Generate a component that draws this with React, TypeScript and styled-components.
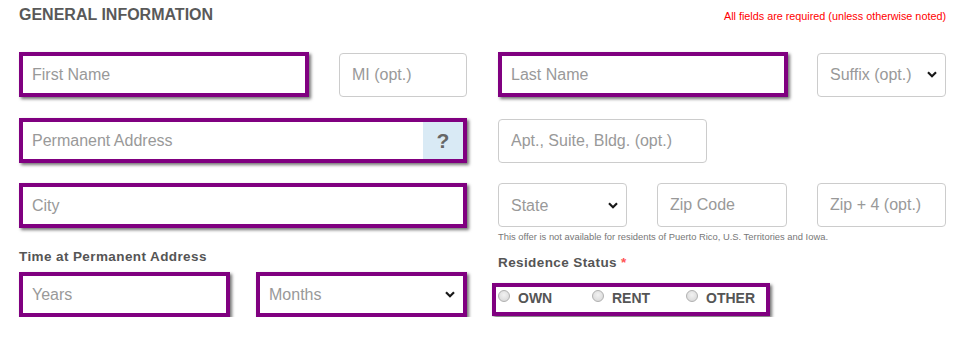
import styled, { createGlobalStyle } from 'styled-components';

const GlobalStyle = createGlobalStyle`
  body {
    margin: 0;
    background: #fff;
    font-family: "Liberation Sans", Arial, sans-serif;
  }
`;

const PURPLE = '#800080';

const Page = styled.div`
  width: 963px;
  box-sizing: border-box;
  padding: 6px 17px 0 19px;
`;

const Header = styled.div`
  display: flex;
  justify-content: space-between;
  align-items: flex-start;
  height: 46px;
`;

const Title = styled.h2`
  margin: 0;
  font-size: 16px;
  line-height: 18px;
  font-weight: bold;
  color: #595959;
`;

const RequiredNote = styled.div`
  margin-top: 4px;
  font-size: 10.8px;
  line-height: 13px;
  color: #f00;
`;

const Row = styled.div<{ $top?: number }>`
  display: grid;
  grid-template-columns: 448px 448px;
  column-gap: 31px;
  margin-top: ${p => p.$top ?? 0}px;
`;

const Cell = styled.div`
  display: flex;
  flex-direction: column;
`;

const Fields = styled.div`
  display: flex;
  justify-content: space-between;
  align-items: center;
`;

const Field = styled.div<{ $w: number; $accent?: boolean }>`
  display: flex;
  align-items: center;
  width: ${p => p.$w}px;
  height: ${p => (p.$accent ? 45 : 44)}px;
  box-sizing: border-box;
  background: #fff;
  border: ${p => (p.$accent ? `4px solid ${PURPLE}` : '1px solid #ccc')};
  border-radius: ${p => (p.$accent ? 0 : 4)}px;
  box-shadow: ${p => (p.$accent ? '2px 2px 3px rgba(0, 0, 0, 0.55)' : 'none')};
  overflow: hidden;
`;

const Input = styled.input<{ $accent?: boolean }>`
  flex: 1;
  min-width: 0;
  height: 100%;
  border: none;
  outline: none;
  background: transparent;
  padding: 0 0 0 ${p => (p.$accent ? 9 : 12)}px;
  font-family: "Liberation Sans", Arial, sans-serif;
  font-size: 16px;
  color: #333;
  &::placeholder {
    color: #999;
  }
`;

const Select = styled.select<{ $accent?: boolean }>`
  flex: 1;
  min-width: 0;
  height: 100%;
  appearance: none;
  border: none;
  outline: none;
  background: transparent;
  padding: 0 0 0 ${p => (p.$accent ? 9 : 12)}px;
  font-family: "Liberation Sans", Arial, sans-serif;
  font-size: 16px;
  color: #999;
`;

const Chevron = styled.svg`
  flex: none;
  margin-right: 8px;
`;

const HelpAddon = styled.span`
  flex: none;
  width: 40px;
  height: 100%;
  display: flex;
  align-items: center;
  justify-content: center;
  background: #d9eaf5;
  color: #666;
  font-size: 21px;
  font-weight: bold;
`;

const SmallNote = styled.div`
  margin-top: 4px;
  font-size: 9.4px;
  line-height: 11px;
  color: #777;
`;

const Label = styled.div<{ $gap: number }>`
  font-size: 13.5px;
  line-height: 16px;
  font-weight: bold;
  letter-spacing: 0.4px;
  color: #555;
  margin-bottom: ${p => p.$gap}px;
`;

const Star = styled.span`
  color: #f55;
`;

const StatusCell = styled(Cell)`
  padding-top: 6px;
`;

const RadioBox = styled.div`
  display: flex;
  width: 278px;
  height: 33px;
  box-sizing: border-box;
  margin-left: -6px;
  padding: 3px 0 0 2px;
  border: 4px solid ${PURPLE};
  box-shadow: 2px 2px 3px rgba(0, 0, 0, 0.55);
`;

const RadioItem = styled.label`
  flex: none;
  display: flex;
  align-items: flex-start;
  gap: 8px;
  width: 94px;
  font-size: 14px;
  line-height: 16px;
  font-weight: bold;
  color: #555;
  white-space: nowrap;
`;

const RadioDot = styled.span`
  flex: none;
  width: 12px;
  height: 12px;
  box-sizing: border-box;
  border-radius: 50%;
  border: 1px solid #b0b0b0;
  background: radial-gradient(circle at 50% 40%, #f2f2f2, #d4d4d4);
`;

const ChevronIcon = () => (
  <Chevron width="10" height="7" viewBox="0 0 10 7">
    <path d="M1 1.2 L5 5.2 L9 1.2" fill="none" stroke="#1a1a1a" strokeWidth="2.2" />
  </Chevron>
);

const SelectField = ({ w, accent, label }: { w: number; accent?: boolean; label: string }) => (
  <Field $w={w} $accent={accent}>
    <Select $accent={accent} defaultValue="">
      <option value="" disabled>{label}</option>
    </Select>
    <ChevronIcon />
  </Field>
);

const App = () => {
  return (
    <>
      <GlobalStyle />
      <Page>
        <Header>
          <Title>GENERAL INFORMATION</Title>
          <RequiredNote>All fields are required (unless otherwise noted)</RequiredNote>
        </Header>

        <Row>
          <Fields>
            <Field $w={290} $accent>
              <Input $accent placeholder="First Name" />
            </Field>
            <Field $w={128}>
              <Input placeholder="MI (opt.)" />
            </Field>
          </Fields>
          <Fields>
            <Field $w={290} $accent>
              <Input $accent placeholder="Last Name" />
            </Field>
            <SelectField w={129} label="Suffix (opt.)" />
          </Fields>
        </Row>

        <Row $top={21}>
          <Fields>
            <Field $w={449} $accent>
              <Input $accent placeholder="Permanent Address" />
              <HelpAddon>?</HelpAddon>
            </Field>
          </Fields>
          <Fields>
            <Field $w={209}>
              <Input placeholder="Apt., Suite, Bldg. (opt.)" />
            </Field>
          </Fields>
        </Row>

        <Row $top={20}>
          <Cell>
            <Fields>
              <Field $w={450} $accent>
                <Input $accent placeholder="City" />
              </Field>
            </Fields>
          </Cell>
          <Cell>
            <Fields>
              <SelectField w={129} label="State" />
              <Field $w={130}>
                <Input placeholder="Zip Code" />
              </Field>
              <Field $w={129}>
                <Input placeholder="Zip + 4 (opt.)" />
              </Field>
            </Fields>
            <SmallNote>
              This offer is not available for residents of Puerto Rico, U.S. Territories and Iowa.
            </SmallNote>
          </Cell>
        </Row>

        <Row $top={7}>
          <Cell>
            <Label $gap={7}>Time at Permanent Address</Label>
            <Fields>
              <Field $w={211} $accent>
                <Input $accent placeholder="Years" />
              </Field>
              <SelectField w={211} accent label="Months" />
            </Fields>
          </Cell>
          <StatusCell>
            <Label $gap={12}>
              Residence Status <Star>*</Star>
            </Label>
            <RadioBox>
              <RadioItem>
                <RadioDot />
                OWN
              </RadioItem>
              <RadioItem>
                <RadioDot />
                RENT
              </RadioItem>
              <RadioItem>
                <RadioDot />
                OTHER
              </RadioItem>
            </RadioBox>
          </StatusCell>
        </Row>
      </Page>
    </>
  );
};

export default App;
